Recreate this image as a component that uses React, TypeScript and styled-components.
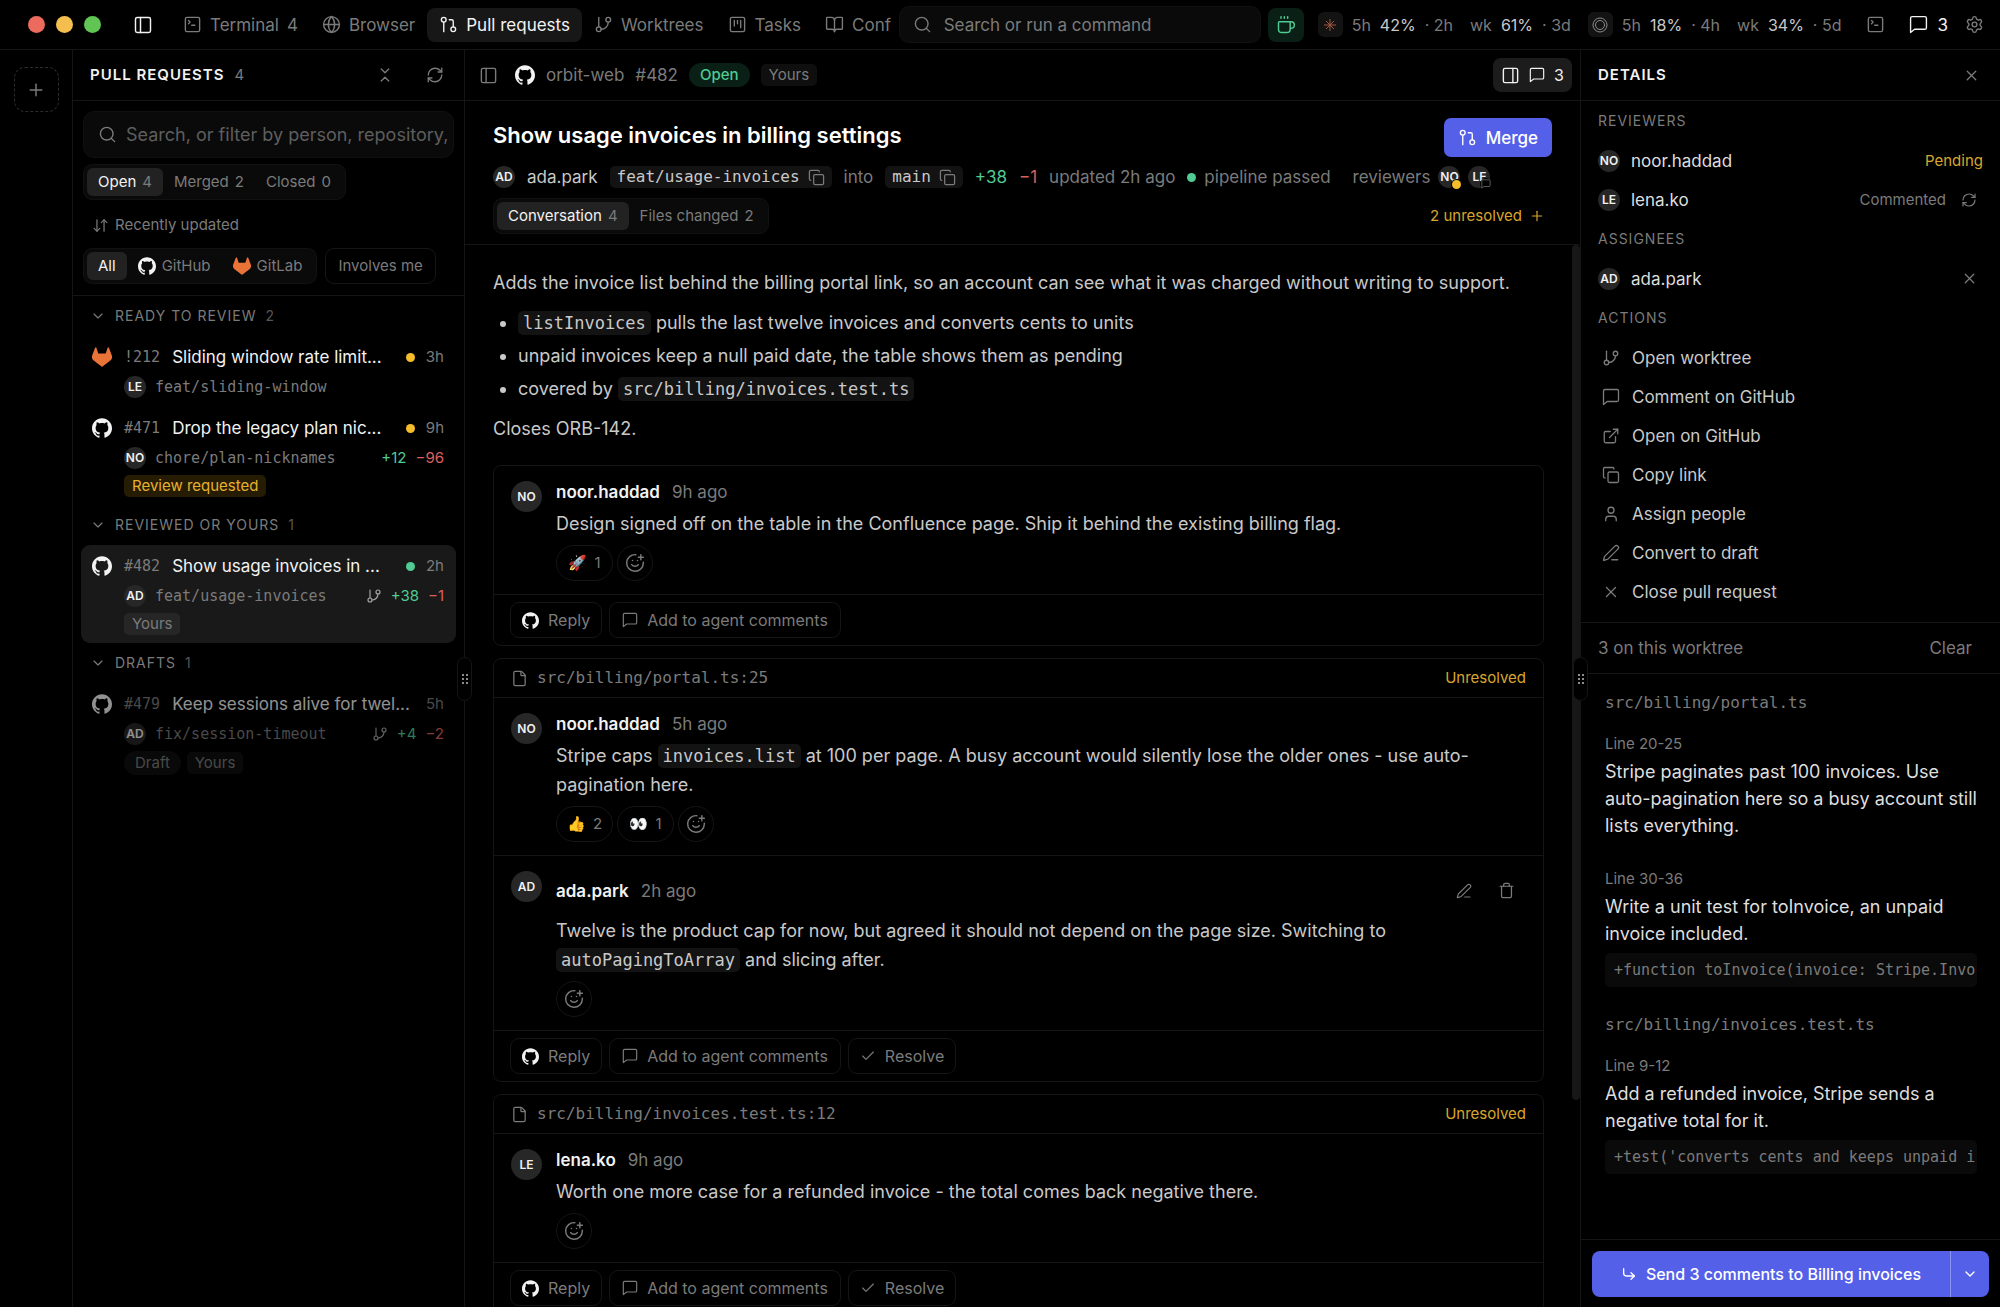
import React from "react";
import styled, { createGlobalStyle, css } from "styled-components";
import {
  ArrowDownUp,
  BookOpen,
  Check,
  ChevronDown,
  ChevronsDownUp,
  Coffee,
  Copy,
  CornerDownRight,
  ExternalLink,
  File,
  GitBranch,
  GitPullRequest,
  Globe,
  PanelLeft,
  PanelRight,
  PenLine,
  Plus,
  RefreshCw,
  Search,
  Settings,
  SmilePlus,
  SquareKanban,
  SquareTerminal,
  Trash,
  User,
  X,
} from "lucide-react";
import { SiGithub, SiGitlab } from "react-icons/si";

const c = {
  line: "#151515",
  strong: "#f2f2f2",
  text: "#c9c9c9",
  muted: "#7b7b7b",
  dim: "#565656",
  surface: "#0a0a0a",
  chip: "#131313",
  active: "#222222",
  green: "#4fcb93",
  greenBg: "#0a1f16",
  red: "#d9605f",
  amber: "#d9a62c",
  dot: "#f5bd2a",
  blue: "#5560e9",
};
const sans = `Inter, "Liberation Sans", sans-serif`;
const mono = `"DejaVu Sans Mono", "Liberation Mono", monospace`;

const Global = createGlobalStyle`
  *, *::before, *::after { box-sizing: border-box; }
  body { margin: 0; background: #000; }
  button, input { font: inherit; color: inherit; }
  button { background: none; border: 0; padding: 0; cursor: pointer; }
  h1, h2, h3, p, ul { margin: 0; padding: 0; font: inherit; }
  svg { flex: none; display: block; }
`;

const Shell = styled.div`
  height: 100vh;
  display: flex;
  flex-direction: column;
  overflow: hidden;
  background: #000;
  color: ${c.text};
  font-family: ${sans};
  font-size: 17px;
  line-height: 24px;
`;

/* ---------- top bar ---------- */
const TopBar = styled.header`
  flex: none;
  display: flex;
  align-items: center;
  height: 50px;
  padding: 0 14px 0 28px;
  border-bottom: 1px solid ${c.line};
  color: ${c.muted};
  white-space: nowrap;
`;
const Lights = styled.div`
  display: flex;
  gap: 11px;
  margin-right: 30px;
`;
const Light = styled.span<{ $color: string }>`
  width: 17px;
  height: 17px;
  border-radius: 50%;
  background: ${(p) => p.$color};
`;
const IconButton = styled.button<{ $color?: string }>`
  display: flex;
  align-items: center;
  justify-content: center;
  flex: none;
  width: 24px;
  height: 24px;
  color: ${(p) => p.$color ?? c.muted};
`;
const Nav = styled.nav`
  flex: 1;
  min-width: 0;
  display: flex;
  margin: 0 4px 0 16px;
  overflow: hidden;
`;
const NavItem = styled.button<{ $active?: boolean }>`
  display: flex;
  align-items: center;
  gap: 8px;
  flex: none;
  height: 34px;
  padding: 0 12px;
  border-radius: 8px;
  background: ${(p) => (p.$active ? "#171717" : "transparent")};
  color: ${(p) => (p.$active ? c.strong : c.muted)};
  &:last-child {
    padding-right: 0;
  }
`;
const Command = styled.label`
  display: flex;
  align-items: center;
  gap: 12px;
  flex: none;
  width: 362px;
  height: 37px;
  padding: 0 13px;
  border: 1px solid #101010;
  border-radius: 10px;
  background: ${c.surface};
`;
const BareInput = styled.input`
  flex: 1;
  min-width: 0;
  padding: 0;
  border: 0;
  outline: 0;
  background: none;
  color: ${c.text};
  &::placeholder {
    color: ${c.muted};
    opacity: 1;
  }
`;
const CoffeeButton = styled.button`
  display: flex;
  align-items: center;
  justify-content: center;
  width: 36px;
  height: 34px;
  margin: 0 14px 0 7px;
  border-radius: 8px;
  background: ${c.greenBg};
  color: ${c.green};
`;
const Usage = styled.div`
  display: flex;
  align-items: center;
  gap: 9px;
  margin-right: 17px;
  font-size: 16px;
`;
const UsageLogo = styled.span`
  display: flex;
  align-items: center;
  justify-content: center;
  width: 25px;
  height: 25px;
  border-radius: 6px;
  background: ${c.chip};
`;
const Meter = styled.span`
  display: flex;
  gap: 9px;
  & + & {
    margin-left: 8px;
  }
`;
const MeterValue = styled.span`
  color: ${c.text};
`;
const TopActions = styled.div`
  display: flex;
  align-items: center;
  gap: 14px;
  margin-left: 5px;
`;
const CountButton = styled.button`
  display: flex;
  align-items: center;
  gap: 9px;
  margin-left: 8px;
  color: ${c.strong};
`;

/* ---------- page columns ---------- */
const Columns = styled.div`
  flex: 1;
  min-height: 0;
  display: grid;
  grid-template-columns: 72px 392px minmax(0, 1fr) 420px;
`;
const Rail = styled.aside`
  display: flex;
  flex-direction: column;
  align-items: center;
  padding-top: 17px;
`;
const AddProject = styled.button`
  display: flex;
  align-items: center;
  justify-content: center;
  width: 45px;
  height: 45px;
  border: 1px dashed #2c2c2c;
  border-radius: 11px;
  color: ${c.muted};
`;
const Column = styled.section`
  position: relative;
  min-width: 0;
  min-height: 0;
  display: flex;
  flex-direction: column;
  border-left: 1px solid ${c.line};
`;
const ColumnHead = styled.div`
  flex: none;
  display: flex;
  align-items: center;
  height: 51px;
  padding: 0 17px;
  border-bottom: 1px solid ${c.line};
`;
const ColumnTitle = styled.h2`
  color: ${c.strong};
  font-size: 15px;
  font-weight: 600;
  letter-spacing: 1px;
`;
const Count = styled.span`
  color: ${c.dim};
`;
const HeadCount = styled(Count)`
  margin-left: 10px;
  font-size: 15px;
  color: ${c.muted};
`;
const Spacer = styled.span`
  flex: 1;
`;
const HeadIcons = styled.div`
  display: flex;
  gap: 26px;
`;
const Handle = styled.div`
  position: absolute;
  z-index: 2;
  top: 607px;
  left: -8px;
  display: flex;
  align-items: center;
  justify-content: center;
  width: 15px;
  height: 44px;
  border: 1px solid ${c.line};
  border-radius: 8px;
  background: #000;
`;

/* ---------- sidebar ---------- */
const Filters = styled.div`
  flex: none;
  display: flex;
  flex-direction: column;
  align-items: flex-start;
  padding: 10px 10px 11px;
  border-bottom: 1px solid ${c.line};
`;
const FilterSearch = styled.label`
  display: flex;
  align-items: center;
  gap: 9px;
  width: 100%;
  height: 47px;
  margin-bottom: 6px;
  padding: 0 4px 0 14px;
  border: 1px solid #101010;
  border-radius: 11px;
  background: ${c.surface};
  color: ${c.muted};
  font-size: 18px;
`;
const FilterInput = styled(BareInput)`
  &::placeholder {
    color: #5e5e5e;
  }
`;
const Segments = styled.div`
  display: flex;
  height: 36px;
  padding: 3px;
  border: 1px solid #111;
  border-radius: 9px;
  background: ${c.surface};
`;
const Segment = styled.button<{ $active?: boolean }>`
  display: flex;
  align-items: center;
  gap: 6px;
  height: 28px;
  padding: 0 11px;
  border-radius: 6px;
  background: ${(p) => (p.$active ? c.active : "transparent")};
  color: ${(p) => (p.$active ? c.strong : c.muted)};
  font-size: 15px;
  white-space: nowrap;
`;
const SegmentCount = styled.span`
  color: ${c.muted};
`;
const Sort = styled.button`
  display: flex;
  align-items: center;
  gap: 6px;
  height: 24px;
  margin: 13px 0 11px 9px;
  color: ${c.muted};
  font-size: 15px;
`;
const FilterRow = styled.div`
  display: flex;
  gap: 8px;
`;
const Outline = styled.button<{ $pad?: number; $small?: boolean }>`
  display: flex;
  align-items: center;
  gap: 9px;
  height: 36px;
  padding: 0 ${(p) => p.$pad ?? 12}px;
  border: 1px solid ${c.line};
  border-radius: 9px;
  color: ${c.muted};
  white-space: nowrap;
  font-size: ${(p) => (p.$small ? 15 : 16)}px;
`;
const Group = styled.div`
  padding: 0 8px;
`;
const GroupHead = styled.button`
  display: flex;
  align-items: center;
  gap: 9px;
  width: 100%;
  height: 40px;
  padding: 0 9px;
  color: ${c.muted};
  font-size: 14px;
  text-align: left;
`;
const Caps = styled.span`
  letter-spacing: 1px;
`;
const Item = styled.article<{ $selected?: boolean; $faded?: boolean }>`
  display: grid;
  grid-template-columns: 20px minmax(0, 1fr);
  column-gap: 12px;
  padding: 8px 12px 8px 11px;
  border-radius: 9px;
  background: ${(p) => (p.$selected ? "#191919" : "transparent")};
  & + & {
    margin-top: 1px;
  }
  & > * {
    opacity: ${(p) => (p.$faded ? 0.6 : 1)};
  }
`;
const ItemLogo = styled.span`
  display: flex;
  align-items: center;
  height: 26px;
  color: ${c.strong};
`;
const ItemBody = styled.div`
  display: flex;
  flex-direction: column;
  gap: 6px;
`;
const ItemTop = styled.div`
  display: flex;
  align-items: center;
  height: 26px;
  white-space: nowrap;
`;
const ItemNumber = styled.span`
  margin-right: 12px;
  color: ${c.muted};
  font: 15px/24px ${mono};
`;
const ItemTitle = styled.h3`
  flex: 1;
  min-width: 0;
  overflow: hidden;
  color: ${c.strong};
  font-size: 17px;
`;
const ItemAge = styled.span`
  margin-left: 11px;
  color: ${c.muted};
  font-size: 15px;
`;
const Dot = styled.span<{ $color: string }>`
  flex: none;
  width: 9px;
  height: 9px;
  border-radius: 50%;
  background: ${(p) => p.$color};
`;
const ItemMeta = styled.div`
  display: flex;
  align-items: center;
  gap: 9px;
  height: 22px;
  color: ${c.muted};
  font-size: 15px;
`;
const Branch = styled.span`
  font: 15px/22px ${mono};
`;
const Added = styled.span`
  color: ${c.green};
`;
const Removed = styled.span`
  color: ${c.red};
`;
const Tags = styled.div`
  display: flex;
  align-items: center;
  gap: 6px;
`;
const Tag = styled.span<{ $tone?: "amber" | "green" | "round" }>`
  display: flex;
  align-items: center;
  height: 22px;
  padding: 0 8px;
  border-radius: 5px;
  background: rgba(255, 255, 255, 0.06);
  color: ${c.muted};
  font-size: 15px;
  ${(p) =>
    p.$tone === "amber" &&
    css`
      background: #261c04;
      color: #e6b22c;
    `}
  ${(p) =>
    p.$tone === "green" &&
    css`
      height: 24px;
      padding: 0 11px;
      border-radius: 12px;
      background: ${c.greenBg};
      color: ${c.green};
      font-weight: 500;
    `}
  ${(p) =>
    p.$tone === "round" &&
    css`
      height: 24px;
      padding: 0 11px;
      border-radius: 12px;
    `}
`;
const Avatar = styled.span<{ $large?: boolean }>`
  position: relative;
  flex: none;
  display: flex;
  align-items: center;
  justify-content: center;
  width: ${(p) => (p.$large ? 31 : 22)}px;
  height: ${(p) => (p.$large ? 31 : 22)}px;
  border-radius: 50%;
  background: #272727;
  color: ${c.strong};
  font-size: 12px;
  font-weight: 600;
`;
const AvatarMark = styled.span`
  position: absolute;
  right: -2px;
  bottom: -2px;
  display: flex;
  padding: 1px;
  border-radius: 50%;
  background: #000;
  color: ${c.muted};
`;

/* ---------- pull request ---------- */
const Crumbs = styled.div`
  display: flex;
  align-items: center;
  gap: 11px;
  color: ${c.muted};
`;
const PanelToggle = styled.button`
  display: flex;
  align-items: center;
  gap: 9px;
  height: 34px;
  padding: 0 8px;
  border-radius: 8px;
  background: #1c1c1c;
  color: ${c.strong};
  font-size: 16px;
`;
const MainHead = styled(ColumnHead)`
  padding: 0 8px 0 14px;
`;
const Summary = styled.div`
  flex: none;
  display: flex;
  flex-direction: column;
  padding: 17px 28px 10px;
  border-bottom: 1px solid ${c.line};
`;
const TitleRow = styled.div`
  display: flex;
  align-items: center;
  justify-content: space-between;
  height: 39px;
`;
const Title = styled.h1`
  margin-bottom: 6px;
  color: #fff;
  font-size: 22px;
  font-weight: 600;
  line-height: 30px;
`;
const MergeButton = styled.button`
  display: flex;
  align-items: center;
  gap: 9px;
  height: 39px;
  padding: 0 14px;
  border-radius: 7px;
  background: ${c.blue};
  color: #fff;
  font-weight: 500;
`;
const MetaRow = styled.div`
  display: flex;
  align-items: center;
  gap: 12px;
  height: 24px;
  margin: 8px 0 9px;
  color: ${c.muted};
  white-space: nowrap;
`;
const Cluster = styled.span<{ $gap?: number }>`
  display: flex;
  align-items: center;
  gap: ${(p) => p.$gap ?? 8}px;
`;
const Reviewers = styled(Cluster)`
  margin-left: 10px;
`;
const Strong = styled.span`
  color: ${c.text};
`;
const BranchChip = styled.button`
  display: flex;
  align-items: center;
  gap: 8px;
  height: 22px;
  padding: 0 7px;
  border-radius: 5px;
  background: ${c.chip};
  color: ${c.muted};
`;
const BranchName = styled.span`
  color: ${c.text};
  font: 16px/22px ${mono};
`;
const TabRow = styled.div`
  display: flex;
  align-items: center;
  justify-content: space-between;
`;
const Unresolved = styled.button`
  display: flex;
  align-items: center;
  gap: 7px;
  padding-right: 7px;
  color: ${c.amber};
  font-size: 15px;
`;
const Scroll = styled.div`
  flex: 1;
  min-height: 0;
  display: flex;
  overflow: hidden;
`;
const Thread = styled.div`
  flex: 1;
  min-width: 0;
  display: flex;
  flex-direction: column;
  gap: 12px;
  padding: 23px 28px 0;
`;
const ScrollThumb = styled.div`
  flex: none;
  width: 8px;
  height: 855px;
  border-radius: 4px;
  background: #171717;
`;
const Prose = styled.div`
  font-size: 18px;
  line-height: 29px;
`;
const Description = styled(Prose)`
  margin-bottom: 10px;
`;
const Bullets = styled.ul`
  display: flex;
  flex-direction: column;
  gap: 4px;
  margin: 11px 0;
  padding-left: 25px;
`;
const Code = styled.code`
  padding: 2px 5px;
  border-radius: 5px;
  background: ${c.chip};
  font: 17px/20px ${mono};
`;
const Card = styled.article`
  border: 1px solid ${c.line};
  border-radius: 8px;
`;
const CardHead = styled.div`
  display: flex;
  align-items: center;
  gap: 9px;
  height: 39px;
  padding: 0 17px;
  border-bottom: 1px solid ${c.line};
  color: ${c.muted};
`;
const Path = styled.span`
  color: ${c.muted};
  font: 16px/24px ${mono};
`;
const Flag = styled.span`
  color: ${c.amber};
  font-size: 15px;
`;
const CommentRow = styled.div`
  display: flex;
  gap: 14px;
  padding: 13px 17px;
  border-bottom: 1px solid ${c.line};
`;
const CommentAvatar = styled.div`
  padding-top: 2px;
`;
const CommentBody = styled.div`
  flex: 1;
  min-width: 0;
`;
const CommentHead = styled.div<{ $tall?: boolean }>`
  display: flex;
  align-items: center;
  gap: 12px;
  height: ${(p) => (p.$tall ? 43 : 26)}px;
  margin-bottom: 4px;
  color: ${c.muted};
`;
const Author = styled.span`
  color: ${c.strong};
  font-weight: 600;
`;
const CommentTools = styled.div`
  display: flex;
  gap: 18px;
  margin-right: 8px;
`;
const Reactions = styled.div`
  display: flex;
  gap: 4px;
  margin-top: 7px;
`;
const Reaction = styled.button<{ $round?: boolean }>`
  display: flex;
  align-items: center;
  justify-content: center;
  gap: 7px;
  width: ${(p) => (p.$round ? 36 : 57)}px;
  height: 36px;
  border: 1px solid ${c.line};
  border-radius: 18px;
  color: ${c.muted};
  font-size: 15px;
`;
const CardActions = styled.div`
  display: flex;
  gap: 7px;
  padding: 7px 16px;
`;

/* ---------- details ---------- */
const Details = styled.div`
  flex: none;
  padding: 0 17px 11px;
  border-bottom: 1px solid ${c.line};
`;
const DetailLabel = styled.h3`
  height: 40px;
  color: ${c.muted};
  font-size: 14px;
  line-height: 39px;
  letter-spacing: 1px;
`;
const PersonRow = styled.div`
  display: flex;
  align-items: center;
  gap: 11px;
  height: 39px;
`;
const PersonName = styled.span`
  flex: 1;
  color: #dedede;
`;
const PersonState = styled.span<{ $pending?: boolean }>`
  color: ${(p) => (p.$pending ? c.amber : c.muted)};
  font-size: 15px;
`;
const RowIcon = styled(IconButton)`
  margin-right: 2px;
`;
const Action = styled.button`
  display: flex;
  align-items: center;
  gap: 12px;
  width: 100%;
  height: 39px;
  padding-left: 4px;
  color: ${c.muted};
`;
const WorktreeHead = styled.div`
  flex: none;
  display: flex;
  align-items: center;
  justify-content: space-between;
  height: 51px;
  padding: 0 28px 0 17px;
  border-bottom: 1px solid ${c.line};
  color: ${c.muted};
`;
const Notes = styled.div`
  flex: 1;
  min-height: 0;
  padding: 17px 23px 0 24px;
  overflow: hidden;
`;
const NoteFile = styled.h3`
  margin-bottom: 15px;
  color: ${c.muted};
  font: 16px/24px ${mono};
`;
const Note = styled.div`
  margin-bottom: 26px;
  color: #dedede;
  font-size: 18px;
  line-height: 27px;
`;
const NoteLine = styled.div`
  margin-bottom: 1px;
  color: ${c.muted};
  font-size: 15px;
`;
const Snippet = styled.pre`
  margin: 6px 0 0;
  padding: 0 0 0 9px;
  border-radius: 5px;
  background: ${c.surface};
  color: ${c.muted};
  font: 15px/34px ${mono};
  overflow: hidden;
`;
const Footer = styled.div`
  flex: none;
  padding: 11px 11px 10px 11px;
  border-top: 1px solid ${c.line};
`;
const SplitButton = styled.div`
  display: flex;
  height: 46px;
  border-radius: 8px;
  overflow: hidden;
  background: ${c.blue};
  color: #fff;
`;
const SendButton = styled.button`
  flex: 1;
  display: flex;
  align-items: center;
  justify-content: center;
  gap: 9px;
  font-size: 16px;
  font-weight: 500;
`;
const SendMenu = styled.button`
  display: flex;
  align-items: center;
  justify-content: center;
  width: 39px;
  border-left: 1px solid #8d95f2;
`;

const stroke = 1.75;

const Bubble = ({ size = 18 }: { size?: number }) => (
  <svg
    width={size}
    height={size}
    viewBox="0 0 24 24"
    fill="none"
    stroke="currentColor"
    strokeWidth={stroke}
    strokeLinecap="round"
    strokeLinejoin="round"
    aria-hidden
  >
    <path d="M22 16a2 2 0 0 1-2 2H7l-5 4V4a2 2 0 0 1 2-2h16a2 2 0 0 1 2 2z" />
  </svg>
);

const Burst = () => (
  <svg width="14" height="14" viewBox="0 0 14 14" stroke="#a3563f" strokeWidth="1" aria-hidden>
    <path d="M7 1v12M1 7h12M3 3l8 8M11 3l-8 8" />
  </svg>
);

const Rings = () => (
  <svg width="16" height="16" viewBox="0 0 16 16" fill="none" stroke="#8a8a8a" aria-hidden>
    <circle cx="8" cy="8" r="7" />
    <circle cx="8" cy="8" r="4.5" />
  </svg>
);

const Grip = () => (
  <svg width="7" height="12" viewBox="0 0 7 12" fill="#8c8c8c" aria-hidden>
    {[1, 5, 9].map((y) => (
      <React.Fragment key={y}>
        <rect x="1" y={y} width="2" height="2" />
        <rect x="5" y={y} width="2" height="2" />
      </React.Fragment>
    ))}
  </svg>
);

const GitHub = ({ size = 18 }: { size?: number }) => <SiGithub size={size} color={c.strong} />;
const GitLab = ({ size = 18 }: { size?: number }) => <SiGitlab size={size} color="#ea7338" />;

const navItems = [
  { label: "Terminal", count: 4, icon: SquareTerminal },
  { label: "Browser", icon: Globe },
  { label: "Pull requests", icon: GitPullRequest, active: true },
  { label: "Worktrees", icon: GitBranch },
  { label: "Tasks", icon: SquareKanban },
  { label: "Conf", icon: BookOpen },
];

const usages = [
  { logo: <Burst />, meters: [["5h", "42%", "2h"], ["wk", "61%", "3d"]] },
  { logo: <Rings />, meters: [["5h", "18%", "4h"], ["wk", "34%", "5d"]] },
];

type Pull = {
  host: "github" | "gitlab";
  number: string;
  title: string;
  dot?: string;
  age: string;
  who: string;
  branch: string;
  worktree?: boolean;
  diff?: [string, string];
  tags?: { text: string; tone?: "amber" | "round" }[];
  selected?: boolean;
  faded?: boolean;
};

const groups: { name: string; pulls: Pull[] }[] = [
  {
    name: "READY TO REVIEW",
    pulls: [
      { host: "gitlab", number: "!212", title: "Sliding window rate limit...", dot: c.dot, age: "3h", who: "LE", branch: "feat/sliding-window" },
      { host: "github", number: "#471", title: "Drop the legacy plan nic...", dot: c.dot, age: "9h", who: "NO", branch: "chore/plan-nicknames", diff: ["+12", "−96"], tags: [{ text: "Review requested", tone: "amber" }] },
    ],
  },
  {
    name: "REVIEWED OR YOURS",
    pulls: [
      { host: "github", number: "#482", title: "Show usage invoices in ...", dot: c.green, age: "2h", who: "AD", branch: "feat/usage-invoices", worktree: true, diff: ["+38", "−1"], tags: [{ text: "Yours" }], selected: true },
    ],
  },
  {
    name: "DRAFTS",
    pulls: [
      { host: "github", number: "#479", title: "Keep sessions alive for twel...", age: "5h", who: "AD", branch: "fix/session-timeout", worktree: true, diff: ["+4", "−2"], tags: [{ text: "Draft", tone: "round" }, { text: "Yours" }], faded: true },
    ],
  },
];

const actions = [
  { label: "Open worktree", icon: <GitBranch size={18} strokeWidth={stroke} /> },
  { label: "Comment on GitHub", icon: <Bubble /> },
  { label: "Open on GitHub", icon: <ExternalLink size={18} strokeWidth={stroke} /> },
  { label: "Copy link", icon: <Copy size={18} strokeWidth={stroke} /> },
  { label: "Assign people", icon: <User size={18} strokeWidth={stroke} /> },
  { label: "Convert to draft", icon: <PenLine size={18} strokeWidth={stroke} /> },
  { label: "Close pull request", icon: <X size={18} strokeWidth={stroke} /> },
];

function PullItem({ pull }: { pull: Pull }) {
  return (
    <Item $selected={pull.selected} $faded={pull.faded}>
      <ItemLogo>{pull.host === "github" ? <GitHub size={20} /> : <GitLab size={20} />}</ItemLogo>
      <ItemBody>
        <ItemTop>
          <ItemNumber>{pull.number}</ItemNumber>
          <ItemTitle>{pull.title}</ItemTitle>
          {pull.dot && <Dot $color={pull.dot} />}
          <ItemAge>{pull.age}</ItemAge>
        </ItemTop>
        <ItemMeta>
          <Avatar>{pull.who}</Avatar>
          <Branch>{pull.branch}</Branch>
          <Spacer />
          {pull.worktree && <GitBranch size={16} strokeWidth={stroke} color="#a5a5a5" />}
          {pull.diff && (
            <>
              <Added>{pull.diff[0]}</Added>
              <Removed>{pull.diff[1]}</Removed>
            </>
          )}
        </ItemMeta>
        {pull.tags && (
          <Tags>
            {pull.tags.map((t) => (
              <Tag key={t.text} $tone={t.tone}>
                {t.text}
              </Tag>
            ))}
          </Tags>
        )}
      </ItemBody>
    </Item>
  );
}

function Comment(props: {
  who: string;
  author: string;
  age: string;
  reactions?: [string, number][];
  own?: boolean;
  children: React.ReactNode;
}) {
  return (
    <CommentRow>
      <CommentAvatar>
        <Avatar $large>{props.who}</Avatar>
      </CommentAvatar>
      <CommentBody>
        <CommentHead $tall={props.own}>
          <Author>{props.author}</Author>
          <span>{props.age}</span>
          {props.own && (
            <>
              <Spacer />
              <CommentTools>
                <IconButton aria-label="Edit comment">
                  <PenLine size={16} strokeWidth={stroke} />
                </IconButton>
                <IconButton aria-label="Delete comment">
                  <Trash size={17} strokeWidth={stroke} />
                </IconButton>
              </CommentTools>
            </>
          )}
        </CommentHead>
        <Prose>{props.children}</Prose>
        <Reactions>
          {props.reactions?.map(([emoji, n]) => (
            <Reaction key={emoji}>
              <span>{emoji}</span>
              <span>{n}</span>
            </Reaction>
          ))}
          <Reaction $round aria-label="Add reaction">
            <SmilePlus size={20} strokeWidth={stroke} />
          </Reaction>
        </Reactions>
      </CommentBody>
    </CommentRow>
  );
}

function ThreadCard(props: { path?: string; resolvable?: boolean; children: React.ReactNode }) {
  return (
    <Card>
      {props.path && (
        <CardHead>
          <File size={17} strokeWidth={stroke} />
          <Path>{props.path}</Path>
          <Spacer />
          <Flag>Unresolved</Flag>
        </CardHead>
      )}
      {props.children}
      <CardActions>
        <Outline $pad={11}>
          <GitHub size={17} />
          Reply
        </Outline>
        <Outline>
          <Bubble size={16} />
          Add to agent comments
        </Outline>
        {props.resolvable && (
          <Outline $pad={11}>
            <Check size={16} strokeWidth={stroke} />
            Resolve
          </Outline>
        )}
      </CardActions>
    </Card>
  );
}

export default function App() {
  return (
    <Shell>
      <Global />
      <TopBar>
        <Lights>
          <Light $color="#ec6a5e" />
          <Light $color="#f4bf4f" />
          <Light $color="#61c554" />
        </Lights>
        <IconButton aria-label="Toggle sidebar" $color={c.strong}>
          <PanelLeft size={20} strokeWidth={stroke} />
        </IconButton>
        <Nav>
          {navItems.map(({ label, count, icon: Icon, active }) => (
            <NavItem key={label} $active={active}>
              <Icon size={19} strokeWidth={stroke} />
              <span>{label}</span>
              {count && <span>{count}</span>}
            </NavItem>
          ))}
        </Nav>
        <Command>
          <Search size={19} strokeWidth={stroke} />
          <BareInput aria-label="Search or run a command" placeholder="Search or run a command" />
        </Command>
        <CoffeeButton aria-label="Keep awake">
          <Coffee size={20} strokeWidth={stroke} />
        </CoffeeButton>
        {usages.map((u, i) => (
          <Usage key={i}>
            <UsageLogo>{u.logo}</UsageLogo>
            {u.meters.map(([span, value, left]) => (
              <Meter key={span}>
                <span>{span}</span>
                <MeterValue>{value}</MeterValue>
                <span>· {left}</span>
              </Meter>
            ))}
          </Usage>
        ))}
        <TopActions>
          <IconButton aria-label="Open terminal">
            <SquareTerminal size={19} strokeWidth={stroke} />
          </IconButton>
          <CountButton aria-label="Comments">
            <Bubble size={19} />3
          </CountButton>
          <IconButton aria-label="Settings">
            <Settings size={19} strokeWidth={stroke} />
          </IconButton>
        </TopActions>
      </TopBar>

      <Columns>
        <Rail>
          <AddProject aria-label="Add project">
            <Plus size={20} strokeWidth={stroke} />
          </AddProject>
        </Rail>

        <Column>
          <ColumnHead>
            <ColumnTitle>PULL REQUESTS</ColumnTitle>
            <HeadCount>4</HeadCount>
            <Spacer />
            <HeadIcons>
              <IconButton aria-label="Collapse all">
                <ChevronsDownUp size={18} strokeWidth={stroke} />
              </IconButton>
              <IconButton aria-label="Refresh">
                <RefreshCw size={18} strokeWidth={stroke} />
              </IconButton>
            </HeadIcons>
          </ColumnHead>
          <Filters>
            <FilterSearch>
              <Search size={19} strokeWidth={stroke} />
              <FilterInput
                aria-label="Filter pull requests"
                placeholder="Search, or filter by person, repository,"
              />
            </FilterSearch>
            <Segments>
              <Segment $active>
                Open <SegmentCount>4</SegmentCount>
              </Segment>
              <Segment>
                Merged <SegmentCount>2</SegmentCount>
              </Segment>
              <Segment>
                Closed <SegmentCount>0</SegmentCount>
              </Segment>
            </Segments>
            <Sort>
              <ArrowDownUp size={17} strokeWidth={stroke} />
              Recently updated
            </Sort>
            <FilterRow>
              <Segments>
                <Segment $active>All</Segment>
                <Segment>
                  <GitHub />
                  GitHub
                </Segment>
                <Segment>
                  <GitLab />
                  GitLab
                </Segment>
              </Segments>
              <Outline $small>Involves me</Outline>
            </FilterRow>
          </Filters>
          {groups.map((g) => (
            <Group key={g.name}>
              <GroupHead>
                <ChevronDown size={16} strokeWidth={stroke} />
                <Caps>{g.name}</Caps>
                <Count>{g.pulls.length}</Count>
              </GroupHead>
              {g.pulls.map((p) => (
                <PullItem key={p.number} pull={p} />
              ))}
            </Group>
          ))}
        </Column>

        <Column>
          <Handle>
            <Grip />
          </Handle>
          <MainHead>
            <Crumbs>
              <Cluster $gap={17}>
                <PanelLeft size={19} strokeWidth={stroke} />
                <GitHub size={20} />
              </Cluster>
              <span>orbit-web</span>
              <span>#482</span>
              <Tag $tone="green">Open</Tag>
              <Tag>Yours</Tag>
            </Crumbs>
            <Spacer />
            <PanelToggle aria-label="Toggle details">
              <PanelRight size={19} strokeWidth={stroke} />
              <Bubble size={16} />3
            </PanelToggle>
          </MainHead>
          <Summary>
            <TitleRow>
              <Title>Show usage invoices in billing settings</Title>
              <MergeButton>
                <GitPullRequest size={19} strokeWidth={stroke} />
                Merge
              </MergeButton>
            </TitleRow>
            <MetaRow>
              <Cluster $gap={12}>
                <Avatar>AD</Avatar>
                <Strong>ada.park</Strong>
              </Cluster>
              <BranchChip>
                <BranchName>feat/usage-invoices</BranchName>
                <Copy size={17} strokeWidth={stroke} />
              </BranchChip>
              <span>into</span>
              <BranchChip>
                <BranchName>main</BranchName>
                <Copy size={17} strokeWidth={stroke} />
              </BranchChip>
              <Added>+38</Added>
              <Removed>−1</Removed>
              <span>updated 2h ago</span>
              <Cluster>
                <Dot $color={c.green} />
                pipeline passed
              </Cluster>
              <Reviewers>
                reviewers
                <Avatar>
                  NO
                  <AvatarMark>
                    <Dot $color={c.dot} />
                  </AvatarMark>
                </Avatar>
                <Avatar>
                  LE
                  <AvatarMark>
                    <Bubble size={10} />
                  </AvatarMark>
                </Avatar>
              </Reviewers>
            </MetaRow>
            <TabRow>
              <Segments>
                <Segment $active>
                  Conversation <SegmentCount>4</SegmentCount>
                </Segment>
                <Segment>
                  Files changed <SegmentCount>2</SegmentCount>
                </Segment>
              </Segments>
              <Unresolved>
                2 unresolved
                <Plus size={16} strokeWidth={stroke} />
              </Unresolved>
            </TabRow>
          </Summary>
          <Scroll>
            <Thread>
              <Description>
                <p>
                  Adds the invoice list behind the billing portal link, so an account can see what it was charged
                  without writing to support.
                </p>
                <Bullets>
                  <li>
                    <Code>listInvoices</Code> pulls the last twelve invoices and converts cents to units
                  </li>
                  <li>unpaid invoices keep a null paid date, the table shows them as pending</li>
                  <li>
                    covered by <Code>src/billing/invoices.test.ts</Code>
                  </li>
                </Bullets>
                <p>Closes ORB-142.</p>
              </Description>
              <ThreadCard>
                <Comment who="NO" author="noor.haddad" age="9h ago" reactions={[["🚀", 1]]}>
                  Design signed off on the table in the Confluence page. Ship it behind the existing billing flag.
                </Comment>
              </ThreadCard>
              <ThreadCard path="src/billing/portal.ts:25" resolvable>
                <Comment who="NO" author="noor.haddad" age="5h ago" reactions={[["👍", 2], ["👀", 1]]}>
                  Stripe caps <Code>invoices.list</Code> at 100 per page. A busy account would silently lose the older
                  ones - use auto-pagination here.
                </Comment>
                <Comment who="AD" author="ada.park" age="2h ago" own>
                  Twelve is the product cap for now, but agreed it should not depend on the page size. Switching to{" "}
                  <Code>autoPagingToArray</Code> and slicing after.
                </Comment>
              </ThreadCard>
              <ThreadCard path="src/billing/invoices.test.ts:12" resolvable>
                <Comment who="LE" author="lena.ko" age="9h ago">
                  Worth one more case for a refunded invoice - the total comes back negative there.
                </Comment>
              </ThreadCard>
            </Thread>
            <ScrollThumb />
          </Scroll>
        </Column>

        <Column>
          <Handle>
            <Grip />
          </Handle>
          <ColumnHead>
            <ColumnTitle>DETAILS</ColumnTitle>
            <Spacer />
            <IconButton aria-label="Close details">
              <X size={17} strokeWidth={stroke} />
            </IconButton>
          </ColumnHead>
          <Details>
            <DetailLabel>REVIEWERS</DetailLabel>
            <PersonRow>
              <Avatar>NO</Avatar>
              <PersonName>noor.haddad</PersonName>
              <PersonState $pending>Pending</PersonState>
            </PersonRow>
            <PersonRow>
              <Avatar>LE</Avatar>
              <PersonName>lena.ko</PersonName>
              <PersonState>Commented</PersonState>
              <RowIcon aria-label="Request again">
                <RefreshCw size={16} strokeWidth={stroke} />
              </RowIcon>
            </PersonRow>
            <DetailLabel>ASSIGNEES</DetailLabel>
            <PersonRow>
              <Avatar>AD</Avatar>
              <PersonName>ada.park</PersonName>
              <RowIcon aria-label="Remove assignee">
                <X size={17} strokeWidth={stroke} />
              </RowIcon>
            </PersonRow>
            <DetailLabel>ACTIONS</DetailLabel>
            {actions.map((a) => (
              <Action key={a.label}>
                {a.icon}
                <Strong>{a.label}</Strong>
              </Action>
            ))}
          </Details>
          <WorktreeHead>
            <span>3 on this worktree</span>
            <button>Clear</button>
          </WorktreeHead>
          <Notes>
            <NoteFile>src/billing/portal.ts</NoteFile>
            <Note>
              <NoteLine>Line 20-25</NoteLine>
              <p>Stripe paginates past 100 invoices. Use auto-pagination here so a busy account still lists everything.</p>
            </Note>
            <Note>
              <NoteLine>Line 30-36</NoteLine>
              <p>Write a unit test for toInvoice, an unpaid invoice included.</p>
              <Snippet>+function toInvoice(invoice: Stripe.Invo</Snippet>
            </Note>
            <NoteFile>src/billing/invoices.test.ts</NoteFile>
            <Note>
              <NoteLine>Line 9-12</NoteLine>
              <p>Add a refunded invoice, Stripe sends a negative total for it.</p>
              <Snippet>+test('converts cents and keeps unpaid i</Snippet>
            </Note>
          </Notes>
          <Footer>
            <SplitButton>
              <SendButton>
                <CornerDownRight size={16} strokeWidth={2} />
                Send 3 comments to Billing invoices
              </SendButton>
              <SendMenu aria-label="Send options">
                <ChevronDown size={16} strokeWidth={2} />
              </SendMenu>
            </SplitButton>
          </Footer>
        </Column>
      </Columns>
    </Shell>
  );
}
